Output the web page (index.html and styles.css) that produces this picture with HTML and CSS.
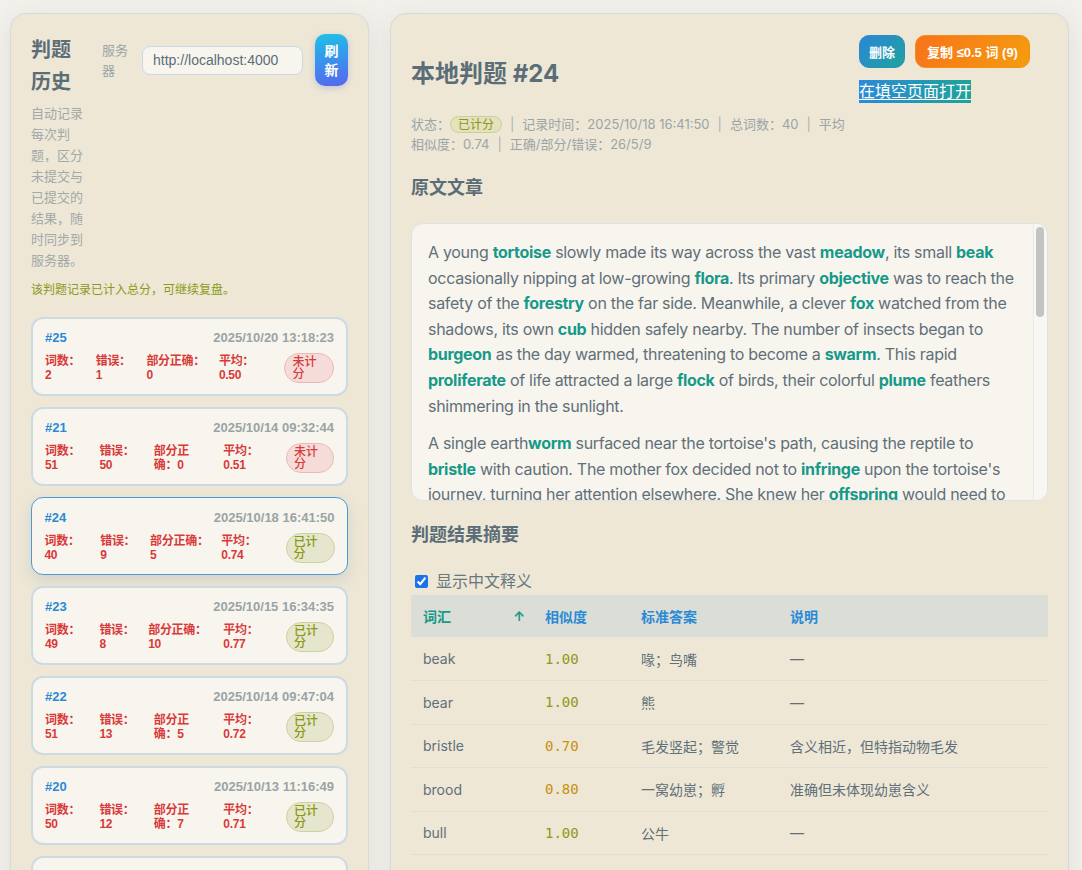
FILE: index.html
```html
<!DOCTYPE html>
<html lang="zh-CN">
<head>
<meta charset="utf-8">
<title>判题历史</title>
<link rel="stylesheet" href="styles.css">
</head>
<body>
<div class="layout">
  <aside class="panel history">
    <div class="history-head">
      <div class="history-title">
        <h2>判题历史</h2>
        <p class="desc">自动记录每次判题，区分未提交与已提交的结果，随时同步到服务器。</p>
      </div>
      <div class="server">
        <label class="server-label" for="server">服务器</label>
        <input id="server" class="server-input" type="text" value="http://localhost:4000">
        <button class="btn-refresh" type="button">刷新</button>
      </div>
    </div>
    <p class="note">该判题记录已计入总分，可继续复盘。</p>
    <ul class="cards">
      <li class="card">
        <div class="card-head"><span class="card-id">#25</span><span class="card-date">2025/10/20 13:18:23</span></div>
        <div class="stats">
          <span class="stat">词数：2</span>
          <span class="stat">错误：1</span>
          <span class="stat">部分正确：0</span>
          <span class="stat">平均：0.50</span>
          <span class="badge pending">未计分</span>
        </div>
      </li>
      <li class="card">
        <div class="card-head"><span class="card-id">#21</span><span class="card-date">2025/10/14 09:32:44</span></div>
        <div class="stats">
          <span class="stat">词数：51</span>
          <span class="stat">错误：50</span>
          <span class="stat">部分正确：0</span>
          <span class="stat">平均：0.51</span>
          <span class="badge pending">未计分</span>
        </div>
      </li>
      <li class="card active">
        <div class="card-head"><span class="card-id">#24</span><span class="card-date">2025/10/18 16:41:50</span></div>
        <div class="stats">
          <span class="stat">词数：40</span>
          <span class="stat">错误：9</span>
          <span class="stat">部分正确：5</span>
          <span class="stat">平均：0.74</span>
          <span class="badge scored">已计分</span>
        </div>
      </li>
      <li class="card">
        <div class="card-head"><span class="card-id">#23</span><span class="card-date">2025/10/15 16:34:35</span></div>
        <div class="stats">
          <span class="stat">词数：49</span>
          <span class="stat">错误：8</span>
          <span class="stat">部分正确：10</span>
          <span class="stat">平均：0.77</span>
          <span class="badge scored">已计分</span>
        </div>
      </li>
      <li class="card">
        <div class="card-head"><span class="card-id">#22</span><span class="card-date">2025/10/14 09:47:04</span></div>
        <div class="stats">
          <span class="stat">词数：51</span>
          <span class="stat">错误：13</span>
          <span class="stat">部分正确：5</span>
          <span class="stat">平均：0.72</span>
          <span class="badge scored">已计分</span>
        </div>
      </li>
      <li class="card">
        <div class="card-head"><span class="card-id">#20</span><span class="card-date">2025/10/13 11:16:49</span></div>
        <div class="stats">
          <span class="stat">词数：50</span>
          <span class="stat">错误：12</span>
          <span class="stat">部分正确：7</span>
          <span class="stat">平均：0.71</span>
          <span class="badge scored">已计分</span>
        </div>
      </li>
      <li class="card">
        <div class="card-head"><span class="card-id">#19</span><span class="card-date">2025/10/13 10:06:38</span></div>
        <div class="stats">
          <span class="stat">词数：48</span>
          <span class="stat">错误：10</span>
          <span class="stat">部分正确：6</span>
          <span class="stat">平均：0.73</span>
          <span class="badge scored">已计分</span>
        </div>
      </li>
    </ul>
  </aside>

  <main class="panel detail">
    <div class="detail-head">
      <div class="detail-main">
        <h1 class="detail-title">本地判题 #24</h1>
        <p class="meta">状态：<span class="pill">已计分</span><span class="sep">|</span>记录时间：2025/10/18 16:41:50<span class="sep">|</span>总词数：40<span class="sep">|</span>平均相似度：0.74<span class="sep">|</span>正确/部分/错误：26/5/9</p>
      </div>
      <div class="actions">
        <button class="btn btn-delete" type="button">删除</button>
        <button class="btn btn-copy" type="button">复制 ≤0.5 词 (9)</button>
        <a class="open-link" href="#">在填空页面打开</a>
      </div>
    </div>

    <h3 class="section-title first">原文文章</h3>
    <div class="article-wrap">
      <div class="article">
        <p>A young <b>tortoise</b> slowly made its way across the vast <b>meadow</b>, its small <b>beak</b> occasionally nipping at low-growing <b>flora</b>. Its primary <b>objective</b> was to reach the safety of the <b>forestry</b> on the far side. Meanwhile, a clever <b>fox</b> watched from the shadows, its own <b>cub</b> hidden safely nearby. The number of insects began to <b>burgeon</b> as the day warmed, threatening to become a <b>swarm</b>. This rapid <b>proliferate</b> of life attracted a large <b>flock</b> of birds, their colorful <b>plume</b> feathers shimmering in the sunlight.</p>
        <p>A single earth<b>worm</b> surfaced near the tortoise's path, causing the reptile to <b>bristle</b> with caution. The mother fox decided not to <b>infringe</b> upon the tortoise's journey, turning her attention elsewhere. She knew her <b>offspring</b> would need to learn patience before the cold season arrived. On a distant hill, a <b>bear</b> rested beside her <b>brood</b>, while a <b>bull</b> grazed quietly near the fence, indifferent to the small dramas unfolding below.</p>
        <p>By late afternoon, the <b>herd</b> of cattle had moved toward the river, and the <b>flock</b> settled into the tall <b>canopy</b>. The tortoise finally reached the edge of the woods, where the cool <b>foliage</b> offered shelter. It paused, as if to reflect on the long <b>migration</b> it had completed, before disappearing beneath a tangle of ferns and <b>moss</b>.</p>
        <p>Night fell over the meadow. Crickets sang, the fox and her cub returned to their <b>den</b>, and the world grew still, waiting for the next day to <b>unfold</b>.</p>
      </div>
      <div class="scrollbar" aria-hidden="true"><span class="thumb"></span></div>
    </div>

    <h3 class="section-title">判题结果摘要</h3>
    <label class="toggle"><input type="checkbox" checked> 显示中文释义</label>
    <table class="results">
      <colgroup>
        <col class="c-word"><col class="c-sim"><col class="c-ans"><col class="c-note">
      </colgroup>
      <thead>
        <tr>
          <th class="sorted"><span class="th-inner">词汇<span class="arrow">↑</span></span></th>
          <th>相似度</th>
          <th>标准答案</th>
          <th>说明</th>
        </tr>
      </thead>
      <tbody>
        <tr><td>beak</td><td class="score full">1.00</td><td>喙；鸟嘴</td><td>—</td></tr>
        <tr><td>bear</td><td class="score full">1.00</td><td>熊</td><td>—</td></tr>
        <tr><td>bristle</td><td class="score part">0.70</td><td>毛发竖起；警觉</td><td>含义相近，但特指动物毛发</td></tr>
        <tr><td>brood</td><td class="score part">0.80</td><td>一窝幼崽；孵</td><td>准确但未体现幼崽含义</td></tr>
        <tr><td>bull</td><td class="score full">1.00</td><td>公牛</td><td>—</td></tr>
        <tr><td>burgeon</td><td class="score full">1.00</td><td>迅速发展；萌芽</td><td>—</td></tr>
        <tr><td>cub</td><td class="score full">1.00</td><td>幼兽</td><td>—</td></tr>
      </tbody>
    </table>
  </main>
</div>
</body>
</html>
```

FILE: styles.css
```css
* { box-sizing: border-box; }

html, body { margin: 0; }

body {
  background: #f1f0eb;
  font-family: "Inter", "Noto Sans CJK SC", sans-serif;
  color: #5b6e78;
}

.layout {
  display: grid;
  grid-template-columns: 359px 679px;
  column-gap: 21px;
  padding: 13px 13px 0 10px;
  align-items: start;
}

.panel {
  background: #eee7d6;
  border: 1px solid #d5dbdb;
  border-radius: 16px;
  box-shadow: 0 6px 22px rgba(90, 80, 50, 0.10);
}

/* ---------- left: history ---------- */
.history { padding: 20px 20px 24px; }

.history-head {
  display: flex;
  align-items: flex-start;
  gap: 13px;
}

.history-title { width: 58px; flex: none; }

.history-title h2 {
  margin: 0;
  font-size: 20px;
  line-height: 32px;
  font-weight: 700;
  color: #5b6e78;
}

.desc {
  margin: 5px 0 0;
  font-size: 13px;
  line-height: 21px;
  color: #a1a9a9;
}

.server {
  display: flex;
  align-items: center;
  flex: 1;
}

.server-label {
  width: 28px;
  flex: none;
  font-size: 13px;
  line-height: 20px;
  color: #9aa5a7;
  margin-right: 12px;
}

.server-input {
  width: 161px;
  height: 29px;
  flex: none;
  margin: 0 12px 0 0;
  padding: 0 10px;
  border: 1px solid #c7d9e6;
  border-radius: 8px;
  background: #f8f5ee;
  font-family: "Liberation Sans", "Noto Sans CJK SC", sans-serif;
  font-size: 14px;
  color: #5b6e78;
  outline: none;
}

.btn-refresh {
  width: 33px;
  flex: none;
  padding: 7px 8px;
  border: none;
  border-radius: 10px;
  background: linear-gradient(170deg, #1fc1e6 0%, #3a92ec 50%, #5866ee 100%);
  color: #fff;
  font-family: "Noto Sans CJK SC", sans-serif;
  font-size: 14px;
  font-weight: 700;
  line-height: 19px;
  box-shadow: 0 2px 6px rgba(60, 100, 200, 0.25);
}

.note {
  margin: 10px 0 19px;
  font-size: 12px;
  line-height: 17px;
  color: #8a9b18;
}

.cards {
  list-style: none;
  margin: 0;
  padding: 0;
  display: flex;
  flex-direction: column;
  gap: 11px;
}

.card {
  background: #f8f5ee;
  border: 2px solid #cddae1;
  border-radius: 12px;
  padding: 10px 12px 11px;
  font-family: "Liberation Sans", "Noto Sans CJK SC", sans-serif;
}

.card.active {
  border: 1.5px solid #4b9bd9;
  padding: 10.5px 12.5px 11.5px;
  box-shadow: 0 6px 16px rgba(60, 110, 150, 0.16);
}

.card-head {
  display: flex;
  justify-content: space-between;
  align-items: baseline;
  margin-bottom: 6px;
}

.card-id {
  font-size: 13px;
  font-weight: 700;
  color: #2a8ad6;
  line-height: 18px;
}

.card-date {
  font-size: 13px;
  font-weight: 700;
  color: #98a4a6;
  line-height: 18px;
}

.stats {
  display: flex;
  align-items: center;
  gap: 12px;
}

.stat {
  flex: 0 1 auto;
  font-size: 12px;
  font-weight: 700;
  line-height: 14px;
  letter-spacing: -0.3px;
  color: #d83a3a;
}

.badge {
  flex: 0 1 auto;
  padding: 2px 7px;
  border-radius: 999px;
  font-size: 12px;
  line-height: 12px;
  font-weight: 500;
  border: 1px solid;
}

.badge.pending {
  background: #f5dcd8;
  border-color: #ebbab6;
  color: #d73d3d;
}

.badge.scored {
  background: #e6e6cf;
  border-color: #cbd29f;
  color: #869a12;
}

/* ---------- right: detail ---------- */
.detail { padding: 21px 20px 30px; }

.detail-head {
  display: flex;
  align-items: flex-start;
  gap: 12px;
}

.detail-main { flex: 1; min-width: 0; }

.detail-title {
  margin: 23px 0 0;
  font-size: 24px;
  line-height: 32px;
  font-weight: 700;
  color: #5b6e78;
}

.meta {
  margin: 24px 0 0;
  font-size: 13px;
  line-height: 20px;
  color: #9aa5a7;
}

.pill {
  display: inline-block;
  padding: 0 7px;
  border: 1px solid #cacf98;
  border-radius: 999px;
  background: #e4e1bd;
  color: #86991a;
  font-size: 12px;
  line-height: 15px;
}

.sep { margin: 0 8px; color: #a9b2b3; }

.actions {
  width: 189px;
  flex: none;
  display: flex;
  flex-wrap: wrap;
  align-content: flex-start;
  gap: 12px 10px;
}

.btn {
  height: 33px;
  padding: 0 9px;
  border-radius: 10px;
  color: #fff;
  font-family: "Liberation Sans", "Noto Sans CJK SC", sans-serif;
  font-size: 13px;
  font-weight: 700;
}

.btn-delete {
  border: 1px solid #2a8fbf;
  background: linear-gradient(135deg, #2a86d8, #1fa39c);
}

.btn-copy {
  padding: 0 11px;
  border: 1px solid #f0901a;
  background: linear-gradient(120deg, #f8731a, #f59c0e);
}

.open-link {
  display: inline-block;
  font-size: 16px;
  line-height: 23px;
  color: #fff;
  background: linear-gradient(90deg, #2a8ad8, #1ea39a);
  text-decoration: underline;
  text-underline-offset: 2px;
}

.section-title {
  margin: 21px 0 0;
  font-size: 18px;
  line-height: 26px;
  font-weight: 700;
  color: #5b6e78;
}

.article-wrap {
  position: relative;
  margin-top: 22px;
}

.article {
  height: 278px;
  overflow: hidden;
  background: #f8f5ee;
  border: 1px solid #dde3e2;
  border-radius: 12px;
  padding: 4px 30px 4px 16px;
  font-size: 16px;
  line-height: 25.6px;
  letter-spacing: -0.3px;
  color: #5f7079;
}

.article p { margin: 12px 0; }

.article b { color: #17998a; font-weight: 700; }

.scrollbar {
  position: absolute;
  top: 1px;
  right: 1px;
  bottom: 1px;
  width: 14px;
  background: #f8f7f4;
  border-left: 1px solid #eceae6;
  border-radius: 0 11px 11px 0;
}

.thumb {
  position: absolute;
  top: 3px;
  left: 2px;
  width: 8px;
  height: 90px;
  border-radius: 4px;
  background: #c3c3c3;
}

.toggle {
  display: flex;
  align-items: center;
  gap: 8px;
  margin: 22px 0 3px 4px;
  font-size: 16px;
  line-height: 22px;
  color: #66777f;
}

.toggle input { margin: 0; width: 13px; height: 13px; accent-color: #1a73e8; }

.results {
  width: 100%;
  border-collapse: collapse;
  table-layout: fixed;
  font-size: 14px;
}

.c-word { width: 122px; }
.c-sim { width: 96px; }
.c-ans { width: 149px; }

.results th {
  height: 42px;
  padding: 0 12px;
  background: #dbded6;
  text-align: left;
  font-weight: 700;
  color: #2a8ad6;
}

.results th.sorted { color: #17998a; padding-right: 8px; }

.th-inner {
  display: flex;
  justify-content: space-between;
  align-items: center;
}

.arrow { font-size: 13px; color: #17998a; }

.results td {
  height: 43.5px;
  padding: 0 12px;
  border-bottom: 1px solid #e2ded2;
  color: #5f7079;
}

.results td.score {
  font-family: "DejaVu Sans Mono", monospace;
  font-size: 14px;
}

.score.full { color: #8c9a16; }
.score.part { color: #c8900c; }
```
